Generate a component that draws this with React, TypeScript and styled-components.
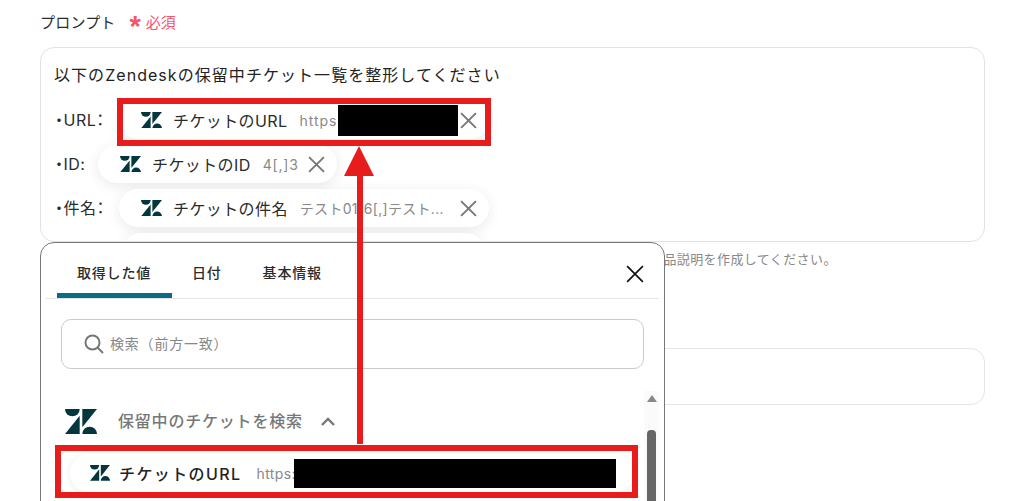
import styled, { createGlobalStyle } from 'styled-components';

const GlobalStyle = createGlobalStyle`
  html, body {
    margin: 0;
    padding: 0;
    background: #fff;
    overflow: hidden;
  }
  * { box-sizing: border-box; }
`;

const ZendeskLogo = ({ size }: { size: number }) => (
  <LogoSvg viewBox="0 0 32 25" width={size} height={size * 25 / 32}>
    <path d="M14.7 6.7V25H0Z" />
    <path d="M14.7 0A7.35 7.35 0 0 1 0 0Z" />
    <path d="M17.3 18.3V0H32Z" />
    <path d="M17.3 25A7.35 7.35 0 0 1 32 25Z" />
  </LogoSvg>
);

const CloseIcon = ({ size, stroke, weight }: { size: number; stroke: string; weight: number }) => (
  <svg viewBox="0 0 16 16" width={size} height={size} fill="none" stroke={stroke} strokeWidth={weight}>
    <path d="M1 1L15 15M15 1L1 15" />
  </svg>
);

export default function App() {
  return (
    <Page>
      <GlobalStyle />
      <FieldLabel>
        プロンプト
        <Required><Star>*</Star>必須</Required>
      </FieldLabel>
      <PromptBox>
        <PromptLine>以下のZendeskの保留中チケット一覧を整形してください</PromptLine>
        <Row>
          <RowLabel $width={64}>・URL：</RowLabel>
          <Chip $width={370}>
            <ZendeskLogo size={21} />
            <ChipName>チケットのURL</ChipName>
            <ChipValue $spacing={1}>https</ChipValue>
            <Redaction $width={120} $height={31} />
            <CloseSlot><CloseIcon size={17} stroke="#777" weight={1.8} /></CloseSlot>
          </Chip>
        </Row>
        <Row>
          <RowLabel $width={43}>・ID:</RowLabel>
          <Chip $width={239}>
            <ZendeskLogo size={21} />
            <ChipName>チケットのID</ChipName>
            <ChipValue $spacing={0.8}>4[,]3</ChipValue>
            <CloseSlot><CloseIcon size={17} stroke="#777" weight={1.8} /></CloseSlot>
          </Chip>
        </Row>
        <Row>
          <RowLabel $width={64}>・件名：</RowLabel>
          <Chip $width={370}>
            <ZendeskLogo size={21} />
            <ChipName>チケットの件名</ChipName>
            <ChipValue $spacing={0.3}>テスト0116[,]テスト...</ChipValue>
            <CloseSlot><CloseIcon size={17} stroke="#777" weight={1.8} /></CloseSlot>
          </Chip>
        </Row>
        <Row>
          <RowLabel $width={67} />
          <Chip $width={363} />
        </Row>
      </PromptBox>
      <Hint>商品説明を作成してください。</Hint>
      <SecondBox />

      <Modal>
        <TabBar>
          <Tab $active>取得した値</Tab>
          <Tab>日付</Tab>
          <Tab>基本情報</Tab>
          <ModalClose><CloseIcon size={18} stroke="#111" weight={1.5} /></ModalClose>
        </TabBar>
        <SearchBox>
          <svg viewBox="0 0 20 20" width={20} height={20} fill="none" stroke="#777" strokeWidth="2">
            <circle cx="8.5" cy="8.5" r="7" />
            <path d="M13.5 13.5L19 19" />
          </svg>
          <SearchText>検索（前方一致）</SearchText>
        </SearchBox>
        <SectionHead>
          <ZendeskLogo size={32} />
          <SectionTitle>保留中のチケットを検索</SectionTitle>
          <svg viewBox="0 0 14 9" width={14} height={9} fill="none" stroke="#777" strokeWidth="2.4">
            <path d="M1 8L7 2L13 8" />
          </svg>
        </SectionHead>
        <ResultChip>
          <ZendeskLogo size={20} />
          <ResultName>チケットのURL</ResultName>
          <ResultValue>https:</ResultValue>
          <Redaction $width={322} $height={29} />
        </ResultChip>
        <ScrollTrack>
          <ScrollArrow />
          <ScrollThumb />
        </ScrollTrack>
      </Modal>

      <Highlight $left={117} $top={98} $width={374} $height={48} />
      <Highlight $left={55} $top={445} $width={583} $height={53} />
      <Arrow viewBox="0 0 30 300" width={30} height={300}>
        <path d="M15 0L30 30H19V298H13V30H0Z" fill="#e71c1c" />
      </Arrow>
    </Page>
  );
}

const Page = styled.div`
  position: relative;
  width: 1020px;
  height: 501px;
  overflow: hidden;
  padding: 10px 35px 0 40px;
  font-family: Inter, "Noto Sans CJK JP", sans-serif;
  color: #222;
`;

const LogoSvg = styled.svg`
  flex: none;
  fill: #03363d;
`;

const FieldLabel = styled.div`
  display: flex;
  align-items: center;
  height: 22px;
  font-size: 15px;
  letter-spacing: 0.2px;
  color: #2b2b2b;
`;

const Required = styled.span`
  display: inline-flex;
  align-items: center;
  margin-left: 14px;
  font-size: 15px;
  letter-spacing: 0;
  color: #f2566c;
`;

const Star = styled.span`
  font-family: "Liberation Sans", sans-serif;
  font-size: 29px;
  font-weight: 700;
  line-height: 24px;
  height: 14px;
  margin-right: 5px;
`;

const PromptBox = styled.div`
  height: 195px;
  margin-top: 15px;
  padding: 15px 13px 0;
  border: 1px solid #e2e2e2;
  border-radius: 14px;
  overflow: hidden;
`;

const PromptLine = styled.div`
  height: 24px;
  font-size: 16px;
  line-height: 24px;
  letter-spacing: 1.05px;
`;

const Row = styled.div`
  display: flex;
  align-items: center;
  height: 38px;
  margin-top: 6px;

  &:nth-child(2) {
    margin-top: 14px;
  }
`;

const RowLabel = styled.div<{ $width: number }>`
  flex: none;
  width: ${p => p.$width}px;
  margin: -2px 0 0 1px;
  font-size: 16px;
  font-feature-settings: "palt";
  letter-spacing: 0.5px;
  color: #2b2b2b;
`;

const Chip = styled.div<{ $width: number }>`
  flex: none;
  display: flex;
  align-items: center;
  width: ${p => p.$width}px;
  height: 38px;
  padding: 0 12px 0 22px;
  border-radius: 19px;
  background: #fff;
  box-shadow: 0 3px 14px rgba(0, 0, 0, 0.09);
`;

const ChipName = styled.span`
  margin-left: 11px;
  font-size: 16px;
  letter-spacing: 0.4px;
  color: #2b2b2b;
  white-space: nowrap;
`;

const ChipValue = styled.span<{ $spacing: number }>`
  margin-left: 12px;
  font-size: 14px;
  letter-spacing: ${p => p.$spacing}px;
  color: #888;
  white-space: nowrap;
`;

const Redaction = styled.div<{ $width: number; $height: number }>`
  flex: none;
  width: ${p => p.$width}px;
  height: ${p => p.$height}px;
  background: #000;
`;

const CloseSlot = styled.span`
  display: flex;
  margin-left: auto;
`;

const Hint = styled.div`
  height: 18px;
  margin-top: 8px;
  padding-left: 610px;
  font-size: 13px;
  line-height: 18px;
  letter-spacing: 0.4px;
  color: #888;
`;

const SecondBox = styled.div`
  height: 57px;
  margin-top: 80px;
  border: 1px solid #e4e4ea;
  border-radius: 14px;
`;

const Modal = styled.div`
  position: absolute;
  left: 40px;
  top: 242px;
  width: 625px;
  height: 300px;
  padding: 0 5px;
  border: 1px solid #777;
  border-radius: 14px;
  background: #fff;
`;

const TabBar = styled.div`
  position: relative;
  display: flex;
  height: 56px;
  padding-left: 11px;
  border-bottom: 1px solid #e4e4e4;
`;

const Tab = styled.div<{ $active?: boolean }>`
  display: flex;
  justify-content: center;
  padding: 19px 21px 0 20px;
  font-size: 14px;
  font-weight: 500;
  line-height: 22px;
  letter-spacing: 0.8px;
  color: #2b2b2b;
  border-bottom: 5px solid ${p => (p.$active ? '#0b6b84' : 'transparent')};
  border-radius: 6px 6px 0 0 / 5px 5px 0 0;
`;

const ModalClose = styled.span`
  position: absolute;
  right: 15px;
  top: 22px;
  display: flex;
`;

const SearchBox = styled.div`
  display: flex;
  align-items: center;
  width: 583px;
  height: 50px;
  margin: 20px 0 0 15px;
  padding-left: 22px;
  border: 1px solid #cacaca;
  border-radius: 10px;
`;

const SearchText = styled.span`
  margin: -2px 0 0 6px;
  font-size: 14px;
  letter-spacing: 0.8px;
  color: #888;
`;

const SectionHead = styled.div`
  display: flex;
  align-items: center;
  height: 26px;
  margin: 39px 0 0 19px;
`;

const SectionTitle = styled.span`
  margin: -2px 18px 0 21px;
  font-size: 16px;
  font-weight: 500;
  letter-spacing: 0.8px;
  color: #777;
`;

const ResultChip = styled.div`
  display: flex;
  align-items: center;
  width: 564px;
  height: 38px;
  margin: 20px 0 0 24px;
  padding-left: 20px;
  border-radius: 19px;
  background: #fff;
  box-shadow: 0 1px 8px rgba(0, 0, 0, 0.08);
`;

const ResultName = styled.span`
  margin-left: 9px;
  font-size: 16px;
  font-weight: 500;
  letter-spacing: 1.4px;
  color: #222;
`;

const ResultValue = styled.span`
  width: 38px;
  margin-left: 15px;
  font-size: 14px;
  letter-spacing: 0.4px;
  color: #888;
  overflow: hidden;
  white-space: nowrap;
`;

const ScrollTrack = styled.div`
  position: absolute;
  right: 5px;
  top: 148px;
  width: 15px;
  height: 150px;
  padding-top: 4px;
  background: #fafafa;
`;

const ScrollArrow = styled.div`
  width: 0;
  height: 0;
  margin: 0 auto;
  border-left: 5px solid transparent;
  border-right: 5px solid transparent;
  border-bottom: 7px solid #888;
`;

const ScrollThumb = styled.div`
  width: 9px;
  height: 100px;
  margin: 28px auto 0;
  border-radius: 4px 4px 0 0;
  background: #666;
`;

const Highlight = styled.div<{ $left: number; $top: number; $width: number; $height: number }>`
  position: absolute;
  left: ${p => p.$left}px;
  top: ${p => p.$top}px;
  width: ${p => p.$width}px;
  height: ${p => p.$height}px;
  border: 6px solid #e71c1c;
`;

const Arrow = styled.svg`
  position: absolute;
  left: 344px;
  top: 146px;
`;
